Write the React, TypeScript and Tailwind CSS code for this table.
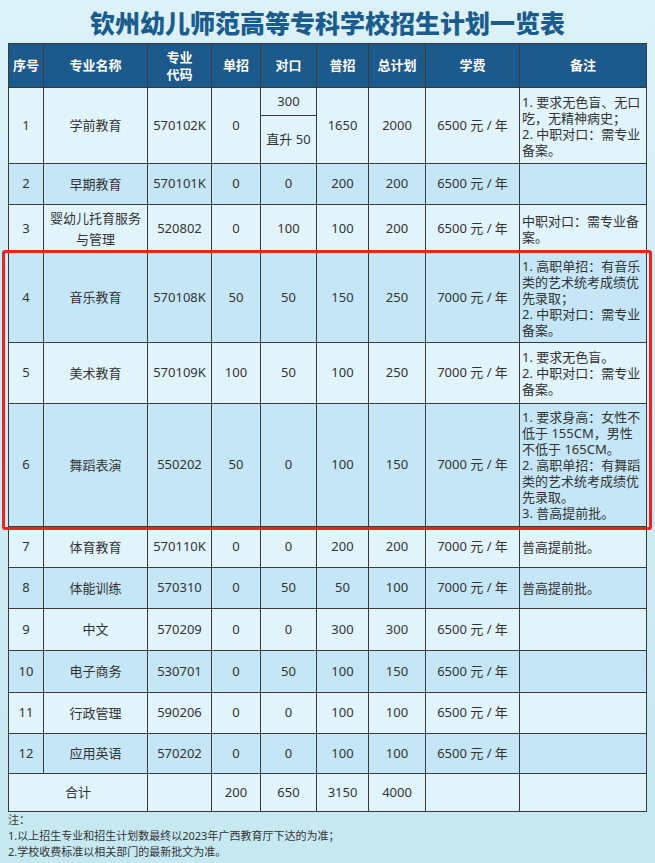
import React from 'react';

type Row = {
  no: string;
  name: React.ReactNode;
  code: string;
  dan: string;
  dui: string;
  pu: string;
  total: string;
  fee: string;
  note: React.ReactNode;
  h: string;
};

const rows: Row[] = [
  {
    no: '2', name: '早期教育', code: '570101K', dan: '0', dui: '0', pu: '200', total: '200',
    fee: '6500 元 / 年', note: '', h: 'h-[41px]',
  },
  {
    no: '3', name: <>婴幼儿托育服务<br />与管理</>, code: '520802', dan: '0', dui: '100', pu: '100', total: '200',
    fee: '6500 元 / 年', note: '中职对口：需专业备案。', h: 'h-[48px]',
  },
  {
    no: '4', name: '音乐教育', code: '570108K', dan: '50', dui: '50', pu: '150', total: '250',
    fee: '7000 元 / 年', note: '1. 高职单招：有音乐类的艺术统考成绩优先录取；\n2. 中职对口：需专业备案。', h: 'h-[90px]',
  },
  {
    no: '5', name: '美术教育', code: '570109K', dan: '100', dui: '50', pu: '100', total: '250',
    fee: '7000 元 / 年', note: '1. 要求无色盲。\n2. 中职对口：需专业备案。', h: 'h-[61px]',
  },
  {
    no: '6', name: '舞蹈表演', code: '550202', dan: '50', dui: '0', pu: '100', total: '150',
    fee: '7000 元 / 年', note: '1. 要求身高：女性不低于 155CM，男性不低于 165CM。\n2. 高职单招：有舞蹈类的艺术统考成绩优先录取。\n3. 普高提前批。', h: 'h-[123px]',
  },
  {
    no: '7', name: '体育教育', code: '570110K', dan: '0', dui: '0', pu: '200', total: '200',
    fee: '7000 元 / 年', note: '普高提前批。', h: 'h-[41px]',
  },
  {
    no: '8', name: '体能训练', code: '570310', dan: '0', dui: '50', pu: '50', total: '100',
    fee: '7000 元 / 年', note: '普高提前批。', h: 'h-[41px]',
  },
  {
    no: '9', name: '中文', code: '570209', dan: '0', dui: '0', pu: '300', total: '300',
    fee: '6500 元 / 年', note: '', h: 'h-[42px]',
  },
  {
    no: '10', name: '电子商务', code: '530701', dan: '0', dui: '50', pu: '100', total: '150',
    fee: '6500 元 / 年', note: '', h: 'h-[42px]',
  },
  {
    no: '11', name: '行政管理', code: '590206', dan: '0', dui: '0', pu: '100', total: '100',
    fee: '6500 元 / 年', note: '', h: 'h-[41px]',
  },
  {
    no: '12', name: '应用英语', code: '570202', dan: '0', dui: '0', pu: '100', total: '100',
    fee: '6500 元 / 年', note: '', h: 'h-[40px]',
  },
];

const td = 'border-[1.5px] border-[#3a3a3a] text-center align-middle p-0';
const noteTd = 'border-[1.5px] border-[#3a3a3a] text-left align-middle pl-[2px] pr-[3px] leading-4 whitespace-pre-line';

export default function App() {
  return (
    <div
      className="relative w-[655px] h-[863px] overflow-hidden bg-gradient-to-b from-[#dcf1f8] to-[#c5e8f1] text-[#333] text-[13px]"
      style={{ fontFamily: '"Noto Sans", "Noto Sans CJK SC", sans-serif' }}
    >
      {/* 标题 */}
      <div className="h-[43px] flex items-center justify-center pt-[2px]">
        <h1
          className="text-[25px] font-black text-[#1b5c8e] leading-none"
          style={{ fontFamily: '"Noto Sans CJK SC", sans-serif' }}
        >
          钦州幼儿师范高等专科学校招生计划一览表
        </h1>
      </div>

      <div className="px-2">
        <table className="w-[638px] table-fixed border-collapse border-[1.5px] border-[#3a3a3a]">
          <colgroup>
            <col className="w-[35px]" />
            <col className="w-[104px]" />
            <col className="w-[64px]" />
            <col className="w-[49px]" />
            <col className="w-[56px]" />
            <col className="w-[52px]" />
            <col className="w-[57px]" />
            <col className="w-[94px]" />
            <col className="w-[127px]" />
          </colgroup>
          <thead>
            <tr className="h-[44px] bg-[#1d5a8c] text-white font-bold text-[13px] leading-[17px]">
              <th className={td}>序号</th>
              <th className={td}>专业名称</th>
              <th className={td}>专业<br />代码</th>
              <th className={td}>单招</th>
              <th className={td}>对口</th>
              <th className={td}>普招</th>
              <th className={td}>总计划</th>
              <th className={td}>学费</th>
              <th className={td}>备注</th>
            </tr>
          </thead>
          <tbody>
            {/* 第 1 行：对口拆成两格 */}
            <tr className="h-[28px] bg-[#e1f3fb]">
              <td rowSpan={2} className={td}>1</td>
              <td rowSpan={2} className={td}>学前教育</td>
              <td rowSpan={2} className={td}>570102K</td>
              <td rowSpan={2} className={td}>0</td>
              <td className={td}>300</td>
              <td rowSpan={2} className={td}>1650</td>
              <td rowSpan={2} className={td}>2000</td>
              <td rowSpan={2} className={td}>6500 元 / 年</td>
              <td rowSpan={2} className={noteTd}>
                {'1. 要求无色盲、无口吃，无精神病史；\n2. 中职对口：需专业备案。'}
              </td>
            </tr>
            <tr className="h-[48px] bg-[#e1f3fb]">
              <td className={td}>直升 50</td>
            </tr>

            {rows.map((r, i) => (
              <tr key={r.no} className={`${r.h} ${i % 2 === 0 ? 'bg-[#c4e6f6]' : 'bg-[#e1f3fb]'}`}>
                <td className={td}>{r.no}</td>
                <td className={`${td} leading-[21px]`}>{r.name}</td>
                <td className={td}>{r.code}</td>
                <td className={td}>{r.dan}</td>
                <td className={td}>{r.dui}</td>
                <td className={td}>{r.pu}</td>
                <td className={td}>{r.total}</td>
                <td className={td}>{r.fee}</td>
                <td className={noteTd}>{r.note}</td>
              </tr>
            ))}

            <tr className="h-[38px] bg-[#e1f3fb]">
              <td colSpan={2} className={td}>合计</td>
              <td className={td}></td>
              <td className={td}>200</td>
              <td className={td}>650</td>
              <td className={td}>3150</td>
              <td className={td}>4000</td>
              <td className={td}></td>
              <td className={td}></td>
            </tr>
          </tbody>
        </table>

        <div className="text-[11px] leading-4 text-[#333]">
          <p>注：</p>
          <p>1.以上招生专业和招生计划数最终以2023年广西教育厅下达的为准；</p>
          <p>2.学校收费标准以相关部门的最新批文为准。</p>
        </div>
      </div>

      {/* 红色标注框 */}
      <div className="absolute left-[2px] top-[250px] w-[650px] h-[280px] border-[3px] border-[#f42020] rounded-[3px] pointer-events-none" />
    </div>
  );
}
